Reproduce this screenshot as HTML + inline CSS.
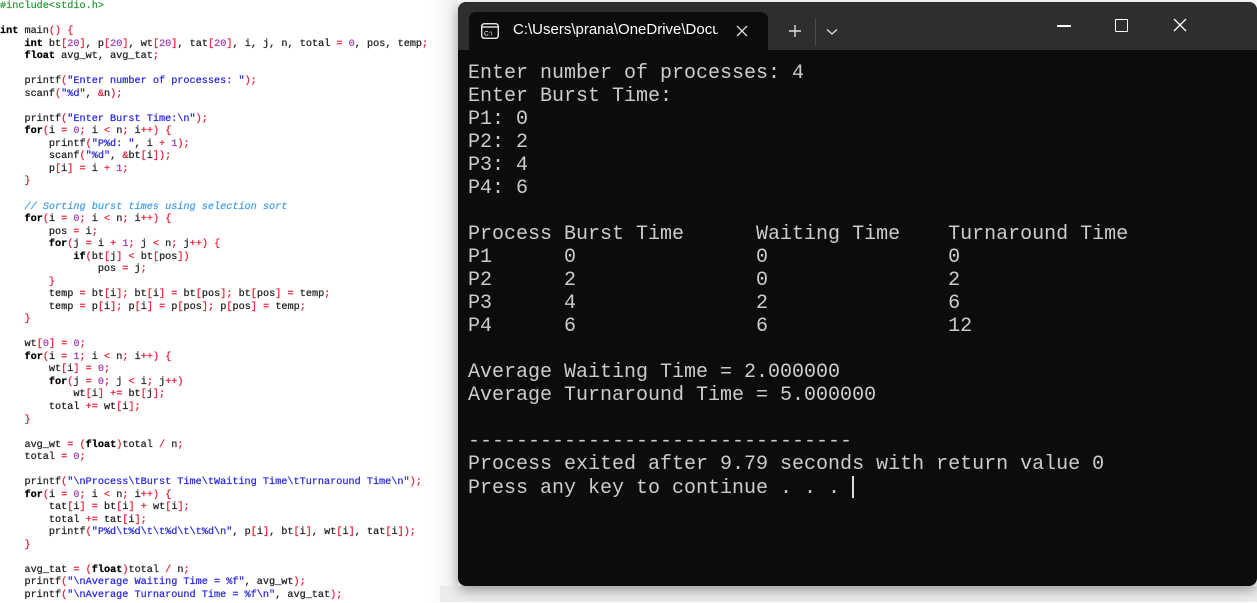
<!DOCTYPE html>
<html><head><meta charset="utf-8"><style>
*{margin:0;padding:0;box-sizing:border-box}
body{width:1257px;height:602px;overflow:hidden;background:#fff;position:relative;font-family:"Liberation Sans",sans-serif}
#code{position:absolute;left:0;top:1px;width:440px;font-family:"Liberation Mono",monospace;font-size:10.2px;line-height:12.53px;color:#222;white-space:pre;-webkit-text-stroke:0.25px}
#code .k{font-weight:bold;color:#000}
#code .p{color:#e8203a}
#code .n{color:#a040b0}
#code .s{color:#2a2ae0}
#code .c{color:#4aa0e8;font-style:italic}
#code .g{color:#2a9a3a}
#shade{position:absolute;left:430px;top:0;width:28px;height:602px;background:linear-gradient(90deg,#fff,#efefef)}
#bot{position:absolute;left:440px;top:586px;width:817px;height:16px;background:#ebebeb}
#win{position:absolute;left:458px;top:2px;width:799px;height:584px;background:#0c0c0c;border-radius:8px;overflow:hidden;box-shadow:0 4px 12px rgba(0,0,0,.35)}
#tb{position:absolute;left:0;top:0;width:100%;height:48px;background:#2e2e2e}
#tab{position:absolute;left:11px;top:10px;width:299px;height:38px;background:#0c0c0c;border-radius:7px 7px 0 0}
#tab .t{position:absolute;left:44px;top:9px;color:#fff;font-size:15px;white-space:nowrap;width:205px;overflow:hidden}
#term{position:absolute;left:10px;top:60px;font-family:"Liberation Mono",monospace;font-size:20px;line-height:23px;color:#cccccc;white-space:pre}
.ic{position:absolute}
</style></head><body>
<div id="shade"></div>
<div id="code"><span class="g">#include&lt;stdio.h&gt;</span>

<span class="k">int</span> main<span class="p">()</span> <span class="p">{</span>
    <span class="k">int</span> bt<span class="p">[</span><span class="n">20</span><span class="p">]</span>, p<span class="p">[</span><span class="n">20</span><span class="p">]</span>, wt<span class="p">[</span><span class="n">20</span><span class="p">]</span>, tat<span class="p">[</span><span class="n">20</span><span class="p">]</span>, i, j, n, total <span class="p">=</span> <span class="n">0</span>, pos, temp<span class="p">;</span>
    <span class="k">float</span> avg_wt, avg_tat<span class="p">;</span>

    printf<span class="p">(</span><span class="s">"Enter number of processes: "</span><span class="p">);</span>
    scanf<span class="p">(</span><span class="s">"%d"</span>, <span class="p">&amp;</span>n<span class="p">);</span>

    printf<span class="p">(</span><span class="s">"Enter Burst Time:\n"</span><span class="p">);</span>
    <span class="k">for</span><span class="p">(</span>i <span class="p">=</span> <span class="n">0</span><span class="p">;</span> i <span class="p">&lt;</span> n<span class="p">;</span> i<span class="p">++)</span> <span class="p">{</span>
        printf<span class="p">(</span><span class="s">"P%d: "</span>, i <span class="p">+</span> <span class="n">1</span><span class="p">);</span>
        scanf<span class="p">(</span><span class="s">"%d"</span>, <span class="p">&amp;</span>bt<span class="p">[</span>i<span class="p">]);</span>
        p<span class="p">[</span>i<span class="p">]</span> <span class="p">=</span> i <span class="p">+</span> <span class="n">1</span><span class="p">;</span>
    <span class="p">}</span>

    <span class="c">// Sorting burst times using selection sort</span>
    <span class="k">for</span><span class="p">(</span>i <span class="p">=</span> <span class="n">0</span><span class="p">;</span> i <span class="p">&lt;</span> n<span class="p">;</span> i<span class="p">++)</span> <span class="p">{</span>
        pos <span class="p">=</span> i<span class="p">;</span>
        <span class="k">for</span><span class="p">(</span>j <span class="p">=</span> i <span class="p">+</span> <span class="n">1</span><span class="p">;</span> j <span class="p">&lt;</span> n<span class="p">;</span> j<span class="p">++)</span> <span class="p">{</span>
            <span class="k">if</span><span class="p">(</span>bt<span class="p">[</span>j<span class="p">]</span> <span class="p">&lt;</span> bt<span class="p">[</span>pos<span class="p">])</span>
                pos <span class="p">=</span> j<span class="p">;</span>
        <span class="p">}</span>
        temp <span class="p">=</span> bt<span class="p">[</span>i<span class="p">];</span> bt<span class="p">[</span>i<span class="p">]</span> <span class="p">=</span> bt<span class="p">[</span>pos<span class="p">];</span> bt<span class="p">[</span>pos<span class="p">]</span> <span class="p">=</span> temp<span class="p">;</span>
        temp <span class="p">=</span> p<span class="p">[</span>i<span class="p">];</span> p<span class="p">[</span>i<span class="p">]</span> <span class="p">=</span> p<span class="p">[</span>pos<span class="p">];</span> p<span class="p">[</span>pos<span class="p">]</span> <span class="p">=</span> temp<span class="p">;</span>
    <span class="p">}</span>

    wt<span class="p">[</span><span class="n">0</span><span class="p">]</span> <span class="p">=</span> <span class="n">0</span><span class="p">;</span>
    <span class="k">for</span><span class="p">(</span>i <span class="p">=</span> <span class="n">1</span><span class="p">;</span> i <span class="p">&lt;</span> n<span class="p">;</span> i<span class="p">++)</span> <span class="p">{</span>
        wt<span class="p">[</span>i<span class="p">]</span> <span class="p">=</span> <span class="n">0</span><span class="p">;</span>
        <span class="k">for</span><span class="p">(</span>j <span class="p">=</span> <span class="n">0</span><span class="p">;</span> j <span class="p">&lt;</span> i<span class="p">;</span> j<span class="p">++)</span>
            wt<span class="p">[</span>i<span class="p">]</span> <span class="p">+=</span> bt<span class="p">[</span>j<span class="p">];</span>
        total <span class="p">+=</span> wt<span class="p">[</span>i<span class="p">];</span>
    <span class="p">}</span>

    avg_wt <span class="p">=</span> <span class="p">(</span><span class="k">float</span><span class="p">)</span>total <span class="p">/</span> n<span class="p">;</span>
    total <span class="p">=</span> <span class="n">0</span><span class="p">;</span>

    printf<span class="p">(</span><span class="s">"\nProcess\tBurst Time\tWaiting Time\tTurnaround Time\n"</span><span class="p">);</span>
    <span class="k">for</span><span class="p">(</span>i <span class="p">=</span> <span class="n">0</span><span class="p">;</span> i <span class="p">&lt;</span> n<span class="p">;</span> i<span class="p">++)</span> <span class="p">{</span>
        tat<span class="p">[</span>i<span class="p">]</span> <span class="p">=</span> bt<span class="p">[</span>i<span class="p">]</span> <span class="p">+</span> wt<span class="p">[</span>i<span class="p">];</span>
        total <span class="p">+=</span> tat<span class="p">[</span>i<span class="p">];</span>
        printf<span class="p">(</span><span class="s">"P%d\t%d\t\t%d\t\t%d\n"</span>, p<span class="p">[</span>i<span class="p">]</span>, bt<span class="p">[</span>i<span class="p">]</span>, wt<span class="p">[</span>i<span class="p">]</span>, tat<span class="p">[</span>i<span class="p">]);</span>
    <span class="p">}</span>

    avg_tat <span class="p">=</span> <span class="p">(</span><span class="k">float</span><span class="p">)</span>total <span class="p">/</span> n<span class="p">;</span>
    printf<span class="p">(</span><span class="s">"\nAverage Waiting Time = %f"</span>, avg_wt<span class="p">);</span>
    printf<span class="p">(</span><span class="s">"\nAverage Turnaround Time = %f\n"</span>, avg_tat<span class="p">);</span>
</div>
<div id="bot"></div>
<div id="win">
  <div id="tb">
    <div id="tab">
      <svg class="ic" style="left:12px;top:11px" width="18" height="16" viewBox="0 0 18 16"><rect x="0.75" y="0.75" width="16.5" height="14.5" rx="2.5" fill="none" stroke="#fff" stroke-width="1.3"/><line x1="1" y1="4" x2="17" y2="4" stroke="#fff" stroke-width="1.2"/><text x="3" y="12.5" font-family="Liberation Sans" font-size="6.5" fill="#fff">C:\</text></svg>
      <div class="t">C:\Users\prana\OneDrive\Documents</div>
      <svg class="ic" style="left:267px;top:13px" width="12" height="12" viewBox="0 0 12 12"><path d="M1 1L11 11M11 1L1 11" stroke="#ddd" stroke-width="1.3"/></svg>
    </div>
    <svg class="ic" style="left:330px;top:22px" width="14" height="14" viewBox="0 0 14 14"><path d="M7 1V13M1 7H13" stroke="#ddd" stroke-width="1.4"/></svg>
    <div style="position:absolute;left:357px;top:16px;width:1px;height:28px;background:#4a4a4a"></div>
    <svg class="ic" style="left:368px;top:26px" width="12" height="8" viewBox="0 0 12 8"><path d="M1 1.5L6 6L11 1.5" stroke="#ddd" stroke-width="1.3" fill="none"/></svg>
    <div style="position:absolute;left:599px;top:23px;width:14px;height:1.5px;background:#fff"></div>
    <div style="position:absolute;left:657px;top:17px;width:13px;height:13px;border:1.3px solid #fff;border-radius:1px"></div>
    <svg class="ic" style="left:715px;top:16px" width="14" height="14" viewBox="0 0 14 14"><path d="M1 1L13 13M13 1L1 13" stroke="#fff" stroke-width="1.3"/></svg>
  </div>
  <div id="term">Enter number of processes: 4
Enter Burst Time:
P1: 0
P2: 2
P3: 4
P4: 6

Process Burst Time      Waiting Time    Turnaround Time
P1      0               0               0
P2      2               0               2
P3      4               2               6
P4      6               6               12

Average Waiting Time = 2.000000
Average Turnaround Time = 5.000000

--------------------------------
Process exited after 9.79 seconds with return value 0
Press any key to continue . . . <span style="display:inline-block;width:1.5px;height:22px;background:#ddd;vertical-align:-5px"></span></div>
</div>
</body></html>
